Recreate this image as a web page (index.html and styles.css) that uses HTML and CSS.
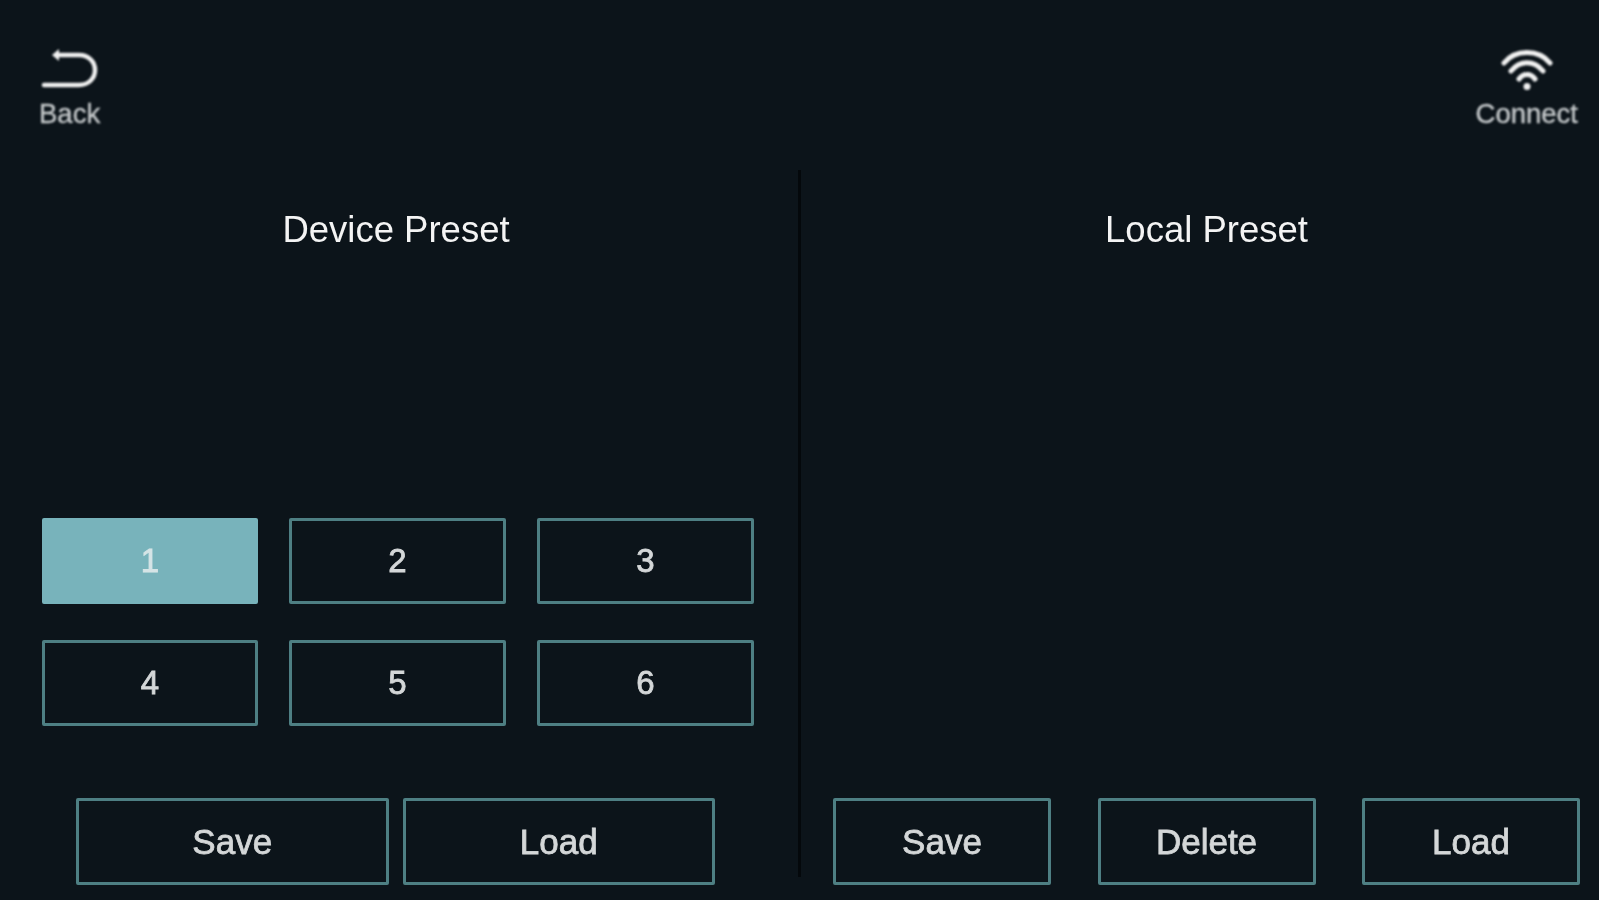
FILE: index.html
```html
<!DOCTYPE html>
<html lang="en">
<head>
  <meta charset="UTF-8">
  <meta name="viewport" content="width=device-width, initial-scale=1.0">
  <title>Presets</title>
  <link rel="stylesheet" href="styles.css">
</head>
<body>
  <header class="top-bar">
    <button class="icon-button">
      <svg class="back-icon" viewBox="0 0 58 40" width="58" height="40" fill="none">
        <path d="M3 37H38C48 37 54 30 54 22C54 14 48 7 38 7H17" stroke="#f2f2f2" stroke-width="4.500" stroke-linecap="round"/>
        <path d="M18 1V13L11 7Z" fill="#f2f2f2"/>
      </svg>
      <span>Back</span>
    </button>
    <button class="icon-button">
      <svg class="wifi-icon" viewBox="0 0 54 44" width="54" height="44" fill="none" stroke="#f2f2f2" stroke-width="5" stroke-linecap="round">
        <path d="M4 15C15 1 39 1 50 15"/>
        <path d="M11 23C20 12 34 12 43 23"/>
        <path d="M19 31C23 25 31 25 35 31"/>
        <circle cx="27" cy="38.500" r="3.500" fill="#f2f2f2" stroke="none"/>
      </svg>
      <span>Connect</span>
    </button>
  </header>

  <main class="panels">
    <section class="panel device-panel">
      <h2>Device Preset</h2>
      <div class="slot-grid">
        <button class="preset-button selected">1</button>
        <button class="preset-button">2</button>
        <button class="preset-button">3</button>
        <button class="preset-button">4</button>
        <button class="preset-button">5</button>
        <button class="preset-button">6</button>
      </div>
      <div class="actions device-actions">
        <button class="preset-button">Save</button>
        <button class="preset-button">Load</button>
      </div>
    </section>
    <section class="panel local-panel">
      <h2>Local Preset</h2>
      <div class="actions local-actions">
        <button class="preset-button">Save</button>
        <button class="preset-button">Delete</button>
        <button class="preset-button">Load</button>
      </div>
    </section>
  </main>
</body>
</html>
```

FILE: styles.css
```css
/* General Reset */
* {
  margin: 0;
  padding: 0;
  box-sizing: border-box;
}

body {
  font-family: 'Liberation Sans', Arial, sans-serif;
  background-color: #0c141a;
  color: #f4f4f4;
  height: 900px;
  overflow: hidden;
}

button {
  font-family: inherit;
  background: none;
  border: none;
  color: inherit;
}

/* Top Bar */
.top-bar {
  display: flex;
  justify-content: space-between;
  height: 170px;
  padding: 48px 21px 0 39px;
}

.icon-button {
  display: flex;
  flex-direction: column;
  align-items: center;
  align-self: flex-start;
  gap: 6px;
  font-size: 27.500px;
  color: #c6cacc;
}

.icon-button span {
  filter: blur(0.9px);
  -webkit-text-stroke: 0.4px #c6cacc;
}

.icon-button svg {
  filter: blur(0.8px);
}

.back-icon {
  margin-bottom: 4px;
}

/* Panels */
.panels {
  display: flex;
  height: 707px;
}

.panel {
  display: flex;
  flex-direction: column;
}

.panel h2 {
  font-size: 36.500px;
  font-weight: 400;
  text-align: center;
  margin-top: 39px;
  filter: blur(0.6px);
}

.device-panel {
  width: 801px;
  padding-left: 42px;
  padding-right: 44px;
  border-right: 3px solid #04080b;
}

.device-panel h2 {
  padding-right: 4px;
}

.local-panel {
  flex: 1;
  padding-left: 32px;
  padding-right: 19px;
}

.slot-grid {
  display: grid;
  grid-template-columns: 216px 217px 217px;
  justify-content: space-between;
  grid-auto-rows: 86px;
  row-gap: 36px;
  margin-top: 267px;
}

.preset-button {
  display: flex;
  align-items: center;
  justify-content: center;
  height: 87px;
  border: 3px solid #4e7f83;
  font-size: 35px;
  font-weight: 400;
  color: #d4d7d8;
  -webkit-text-stroke: 0.8px #d4d7d8;
  border-radius: 2px;
  filter: blur(0.7px);
}

.slot-grid .preset-button {
  height: 86px;
  font-size: 33px;
}

.preset-button.selected {
  background: #78b3bb;
  border-color: #78b3bb;
  color: #d5e4e6;
  -webkit-text-stroke: 0.8px #d5e4e6;
}

.actions {
  display: flex;
  margin-top: auto;
  margin-bottom: -8px;
}

.device-actions {
  gap: 14px;
  padding-left: 34px;
  padding-right: 39px;
}

.device-actions .preset-button {
  flex: 1;
}

.local-actions {
  justify-content: space-between;
}

.local-actions .preset-button {
  width: 218px;
}
```
